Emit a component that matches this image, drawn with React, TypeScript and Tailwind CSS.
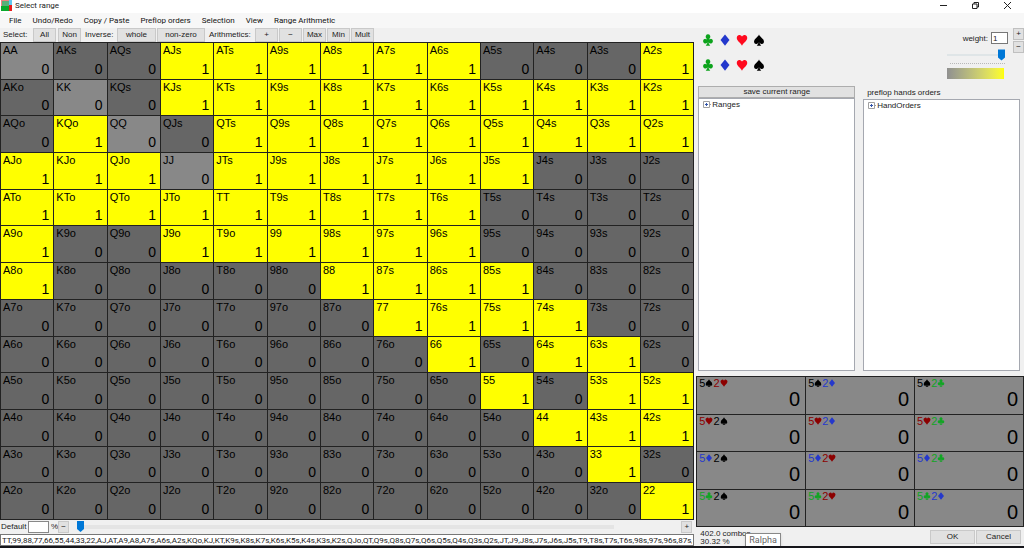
import React from 'react';

const RANKS = ['A', 'K', 'Q', 'J', 'T', '9', '8', '7', '6', '5', '4', '3', '2'];

// one string per row, 1 = hand is in the range
const RANGE = [
  '0001111110001',
  '0001111111111',
  '0100111111111',
  '1110111111000',
  '1111111110000',
  '1001111110000',
  '1000001111000',
  '0000000111100',
  '0000000010110',
  '0000000001011',
  '0000000000111',
  '0000000000010',
  '0000000000001',
];

const RANGE_TEXT =
  'TT,99,88,77,66,55,44,33,22,AJ,AT,A9,A8,A7s,A6s,A2s,KQo,KJ,KT,K9s,K8s,K7s,K6s,K5s,K4s,K3s,K2s,QJo,QT,Q9s,Q8s,Q7s,Q6s,Q5s,Q4s,Q3s,Q2s,JT,J9,J8s,J7s,J6s,J5s,T9,T8s,T7s,T6s,98s,97s,96s,87s,86s,85s,76s,75s,74s,64s,63s,53s,52s,43s,42s';

type Suit = 'c' | 'd' | 'h' | 's';

const COMBOS: [Suit, Suit][] = [
  ['s', 'h'], ['s', 'd'], ['s', 'c'],
  ['h', 's'], ['h', 'd'], ['h', 'c'],
  ['d', 's'], ['d', 'h'], ['d', 'c'],
  ['c', 's'], ['c', 'h'], ['c', 'd'],
];

const SUIT_PATHS: Record<Suit, string> = {
  c: 'M8 .5a3.100 3.100 0 0 1 2.400 5.100c-.5.6-.8 1-.9 1.500.4-.3 1.200-.6 2-.6a3.100 3.100 0 1 1-2.700 4.600c.1 1.900.8 3.200 2.200 4.400H5c1.400-1.200 2.100-2.500 2.200-4.400a3.100 3.100 0 1 1-2.700-4.600c.8 0 1.600.3 2 .6-.1-.5-.4-.9-.9-1.500A3.100 3.100 0 0 1 8 .5z',
  d: 'M8 .5l6 7.500L8 15.500 2 8z',
  h: 'M8 15.500C6.500 12 1 9.500 1 5A3.700 3.700 0 0 1 8 3.300 3.700 3.700 0 0 1 15 5C15 9.500 9.500 12 8 15.500z',
  s: 'M8 .5c1.200 3.500 6.500 5.500 6.500 9.300a2.900 2.900 0 0 1-5.700 1.200c.1 1.900.9 3.200 2.200 4.500H5c1.300-1.300 2.100-2.600 2.200-4.500a2.900 2.900 0 0 1-5.700-1.200C1.500 6 6.800 4 8 .5z',
};

const SUIT_NAMES: Record<Suit, string> = { c: 'Clubs', d: 'Diamonds', h: 'Hearts', s: 'Spades' };

const BRIGHT: Record<Suit, string> = {
  c: 'text-[#0ca31c]',
  d: 'text-[#2338cc]',
  h: 'text-[#ff0a1e]',
  s: 'text-black',
};

const DARK: Record<Suit, string> = {
  c: 'text-[#12a524]',
  d: 'text-[#2538cc]',
  h: 'text-[#8c0000]',
  s: 'text-black',
};

const SuitIcon = ({ suit, className }: { suit: Suit; className: string }) => (
  <svg viewBox="0 0 16 16" className={className} fill="currentColor" aria-hidden="true">
    <path d={SUIT_PATHS[suit]} />
  </svg>
);

const Thumb = ({ className }: { className: string }) => (
  <svg viewBox="0 0 7 11" className={className} fill="#0078d7" aria-hidden="true">
    <path d="M0 0h7v8l-3.500 3L0 8z" />
  </svg>
);

const ToolButton = ({ children, className = '' }: { children: React.ReactNode; className?: string }) => (
  <button className={`h-3.5 shrink-0 border border-[#c9c9c9] bg-[#e1e1e1] text-[8px] leading-3 ${className}`}>
    {children}
  </button>
);

const TitleBar = () => (
  <header className="flex h-[13px] items-start bg-white">
    <svg viewBox="0 0 11 11" className="ml-px size-[11px]" aria-hidden="true">
      <path fill="#f08080" d="M0 0h8v6H0z" />
      <path fill="#58b078" d="M1 1h7v5H1z" />
      <path fill="#5fc8f0" d="M8 0h3v5H8z" />
      <path fill="#0aa82c" d="M0 6h8v5H0z" />
      <path fill="#e81c1c" d="M8 5h3v6H8z" />
    </svg>
    <h1 className="ml-[3px] font-[Roboto,'Noto_Sans',sans-serif] text-[8px] leading-[11px] text-[#222]">Select range</h1>
    <div className="ml-auto flex h-[11px] items-center gap-[25px] pr-[13px]">
      <button aria-label="Minimize" className="h-2 w-[7px]">
        <svg viewBox="0 0 7 8" className="h-2 w-[7px]" stroke="#222"><path d="M0 3.500h7" /></svg>
      </button>
      <button aria-label="Restore" className="size-[7px]">
        <svg viewBox="0 0 7 7" className="size-[7px]" fill="none" stroke="#222">
          <path d="M.5 2h4.500v4.500H.5zM2 2V.5h4.500V5H5" />
        </svg>
      </button>
      <button aria-label="Close" className="size-[7px]">
        <svg viewBox="0 0 7 7" className="size-[7px]" stroke="#222"><path d="M0 0l7 7M7 0L0 7" /></svg>
      </button>
    </div>
  </header>
);

const MenuBar = () => (
  <nav className="flex h-[15px] items-center gap-[11px] bg-[#f7f7f7] pl-[9px] font-[Roboto,'Noto_Sans',sans-serif] text-[8px] leading-3 text-[#111]">
    {['File', 'Undo/Redo', 'Copy / Paste', 'Preflop orders', 'Selection', 'View', 'Range Arithmetic'].map((item) => (
      <button key={item}>{item}</button>
    ))}
  </nav>
);

const Toolbar = () => (
  <div className="flex h-3.5 items-center pl-[3px]">
    <span className="w-[30px]">Select:</span>
    <ToolButton className="mr-0.5 w-[23px]">All</ToolButton>
    <ToolButton className="w-[23px]">Non</ToolButton>
    <span className="ml-1 w-8">Inverse:</span>
    <ToolButton className="mr-px w-[39px]">whole</ToolButton>
    <ToolButton className="w-12">non-zero</ToolButton>
    <span className="ml-1 w-[46px]">Arithmetics:</span>
    <ToolButton className="mr-px w-[23px]">+</ToolButton>
    <ToolButton className="mr-px w-[23px]">−</ToolButton>
    <ToolButton className="mr-px w-[23px]">Max</ToolButton>
    <ToolButton className="mr-px w-[23px]">Min</ToolButton>
    <ToolButton className="w-[23px]">Mult</ToolButton>
  </div>
);

const handName = (row: number, col: number) => {
  if (row === col) return RANKS[row] + RANKS[col];
  return row < col ? `${RANKS[row]}${RANKS[col]}s` : `${RANKS[col]}${RANKS[row]}o`;
};

const HandGrid = () => (
  <div className="grid flex-1 grid-cols-13 grid-rows-13 gap-px border border-[#222] bg-[#222]">
    {RANGE.map((line, row) =>
      line.split('').map((value, col) => {
        const off = row === col ? 'bg-[#888]' : 'bg-[#666]';
        return (
          <button
            key={`${row}-${col}`}
            className={`flex min-h-0 min-w-0 flex-col justify-between pr-1 pl-0.5 text-black ${value === '1' ? 'bg-[#ff0]' : off}`}
          >
            <span className="mt-px self-start text-[11px] leading-3">{handName(row, col)}</span>
            <span className="mb-0.5 self-end text-[14px] leading-4">{value}</span>
          </button>
        );
      }),
    )}
  </div>
);

const BottomBar = () => (
  <>
    <div className="flex h-3.5 items-center">
      <label htmlFor="default" className="w-7 pl-px">Default</label>
      <input id="default" className="h-3 w-[21px] border border-[#888] bg-white" />
      <span className="ml-0.5 w-[7px]">%</span>
      <button className="h-3 w-[11px] border border-[#c9c9c9] bg-[#e1e1e1] leading-[10px]">−</button>
      <div className="relative mr-[67px] ml-2 h-3 flex-1">
        <div className="mt-1 h-1 bg-[#e4e4e4]" />
        <Thumb className="absolute top-0 left-0 h-[11px] w-[7px]" />
        <input type="range" aria-label="Percent" defaultValue={0} className="absolute inset-0 w-full opacity-0" />
      </div>
      <button className="mr-0.5 h-3 w-[11px] border border-[#c9c9c9] bg-[#e1e1e1] leading-[10px]">+</button>
    </div>
    <input
      aria-label="Range text"
      defaultValue={RANGE_TEXT}
      className="h-3 w-full border border-[#777] bg-white px-px font-[Roboto,sans-serif] text-[8px] leading-[10px] text-[#222]"
    />
  </>
);

const SuitFilters = () => (
  <div className="grid grid-cols-4 gap-x-1 gap-y-3">
    {[0, 1].map((row) =>
      (['c', 'd', 'h', 's'] as Suit[]).map((suit) => (
        <button key={`${row}${suit}`} aria-label={SUIT_NAMES[suit]} className={`flex size-[13px] items-center justify-center ${BRIGHT[suit]}`}>
          <SuitIcon suit={suit} className="size-3" />
        </button>
      )),
    )}
  </div>
);

const WeightControl = () => (
  <div className="ml-auto flex">
    <div className="flex w-[61px] flex-col">
      <div className="flex h-4 items-end justify-end">
        <label htmlFor="weight" className="mr-[3px] shrink-0">weight:</label>
        <input id="weight" defaultValue="1" className="h-3 w-[17px] shrink-0 border border-[#777] bg-white px-px" />
      </div>
      <div className="relative mt-[5px] h-3 w-[58px]">
        <div className="h-[7px] border-b-2 border-[#dfe5e7]" />
        <Thumb className="absolute top-0 right-0 h-3 w-[7px]" />
        <input type="range" aria-label="Weight slider" defaultValue={100} className="absolute inset-0 w-full opacity-0" />
      </div>
      <div className="mx-[3px] mt-0.5 border-t border-dotted border-[#b8b8b8]" />
      <div className="mt-1 h-[11px] w-[57px] bg-linear-to-r from-[#909090] to-[#ff0]" />
    </div>
    <div className="ml-[5px] flex flex-col gap-px">
      <button className="h-3 w-[11px] border border-[#c0c0c0] bg-[#e1e1e1] leading-[10px]">+</button>
      <button className="h-3 w-[11px] border border-[#c0c0c0] bg-[#e1e1e1] leading-[10px]">−</button>
    </div>
  </div>
);

const Tree = ({ label }: { label: string }) => (
  <div className="min-h-0 flex-1 border border-[#a5a8b0] bg-white pt-px pl-1">
    <button className="flex items-center gap-px leading-[9px]">
      <svg viewBox="0 0 8 7" className="h-[7px] w-2" fill="none" aria-hidden="true">
        <path stroke="#a0a0a0" d="M.5.5h6v6h-6zM7 3.500h1" />
        <path stroke="#3355aa" d="M2 3.500h3M3.500 2v3" />
      </svg>
      {label}
    </button>
  </div>
);

const ComboGrid = () => (
  <div className="grid h-[151px] grid-cols-3 grid-rows-4 gap-px border border-[#222] bg-[#222]">
    {COMBOS.map(([a, b]) => (
      <button key={a + b} className="flex min-h-0 flex-col justify-between bg-[#888] pr-[5px] pl-0.5 text-black">
        <span className="flex h-3.5 items-center text-[11px] leading-3">
          <span className={DARK[a]}>5</span>
          <SuitIcon suit={a} className={`size-2 ${DARK[a]}`} />
          <span className={DARK[b]}>2</span>
          <SuitIcon suit={b} className={`size-2 ${DARK[b]}`} />
        </span>
        <span className="mb-1.5 self-end text-[20px] leading-5">0</span>
      </button>
    ))}
  </div>
);

export default function App() {
  return (
    <div className="flex h-screen flex-col overflow-hidden border-b-2 border-[#15151a] bg-[#f0f0f0] font-['Liberation_Sans',Arial,sans-serif] text-[8px] leading-[10px] text-[#222]">
      <TitleBar />
      <MenuBar />
      <div className="flex min-h-0 flex-1">
        <main className="flex w-[68%] shrink-0 flex-col pr-0.5">
          <Toolbar />
          <HandGrid />
          <BottomBar />
        </main>

        <aside className="flex min-w-0 flex-1 flex-col">
          <div className="flex h-[58px] pl-[5px]">
            <div className="pt-[5px]">
              <SuitFilters />
            </div>
            <WeightControl />
          </div>
          <div className="flex min-h-0 flex-1 gap-2 pr-1 pb-[5px] pl-0.5">
            <div className="flex flex-1 flex-col">
              <button className="h-3 border border-[#adadad] bg-[#e1e1e1] leading-[10px]">save current range</button>
              <Tree label="Ranges" />
            </div>
            <div className="flex flex-1 flex-col">
              <div className="h-[13px] pt-0.5 pl-1">preflop hands orders</div>
              <Tree label="HandOrders" />
            </div>
          </div>
          <ComboGrid />
          <footer className="relative flex h-[19px] pl-1">
            <div className="pt-[3px] leading-2">
              <div>402.0 combos</div>
              <div>30.32 %</div>
            </div>
            <div className="absolute top-1.5 left-[49px] border border-[#888] bg-white px-[3px] font-[Roboto,sans-serif] text-[9px] leading-3 text-[#666] shadow">
              Ralpha
            </div>
            <div className="mt-[3px] mr-[3px] ml-auto flex gap-px">
              <button className="h-3.5 w-[45px] border border-[#c9c9c9] bg-[#e1e1e1]">OK</button>
              <button className="h-3.5 w-[45px] border border-[#c9c9c9] bg-[#e1e1e1]">Cancel</button>
            </div>
          </footer>
        </aside>
      </div>
    </div>
  );
}
